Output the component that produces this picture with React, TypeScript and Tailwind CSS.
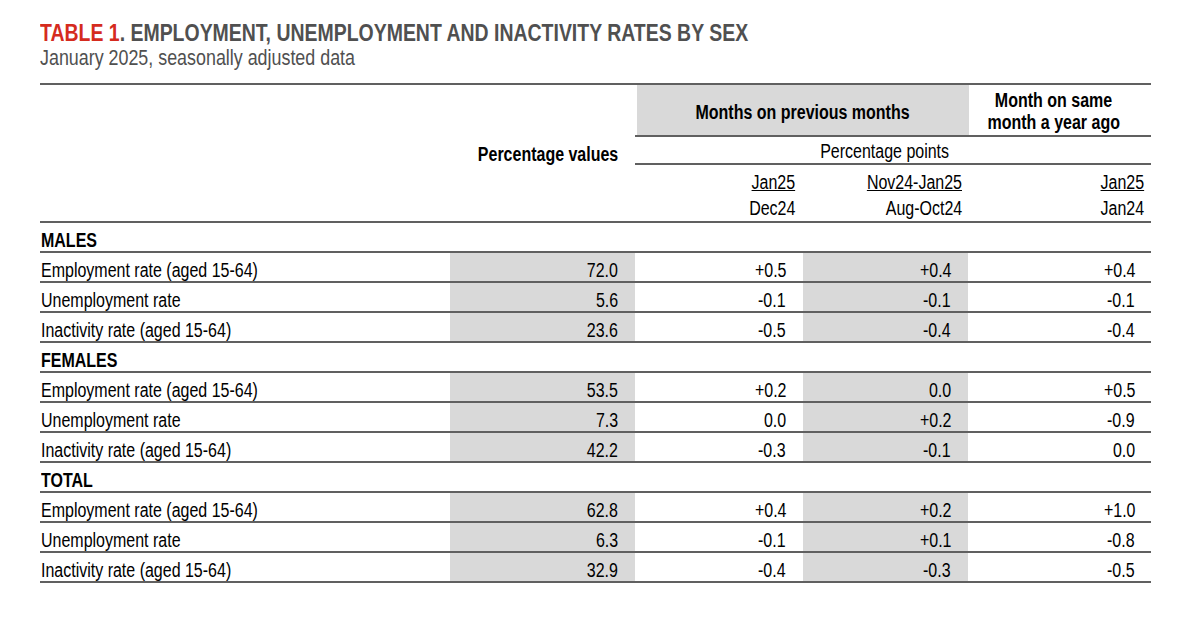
import React from "react";

const FONT = "font-['Liberation_Sans','Arial',sans-serif]";

type Row = { label: string; v: [string, string, string, string] };
type Section = { title: string; rows: Row[] };

const sections: Section[] = [
  {
    title: "MALES",
    rows: [
      { label: "Employment rate (aged 15-64)", v: ["72.0", "+0.5", "+0.4", "+0.4"] },
      { label: "Unemployment rate", v: ["5.6", "-0.1", "-0.1", "-0.1"] },
      { label: "Inactivity rate (aged 15-64)", v: ["23.6", "-0.5", "-0.4", "-0.4"] },
    ],
  },
  {
    title: "FEMALES",
    rows: [
      { label: "Employment rate (aged 15-64)", v: ["53.5", "+0.2", "0.0", "+0.5"] },
      { label: "Unemployment rate", v: ["7.3", "0.0", "+0.2", "-0.9"] },
      { label: "Inactivity rate (aged 15-64)", v: ["42.2", "-0.3", "-0.1", "0.0"] },
    ],
  },
  {
    title: "TOTAL",
    rows: [
      { label: "Employment rate (aged 15-64)", v: ["62.8", "+0.4", "+0.2", "+1.0"] },
      { label: "Unemployment rate", v: ["6.3", "-0.1", "+0.1", "-0.8"] },
      { label: "Inactivity rate (aged 15-64)", v: ["32.9", "-0.4", "-0.3", "-0.5"] },
    ],
  },
];

function L({ children, className = "" }: { children: React.ReactNode; className?: string }) {
  return <span className={`inline-block whitespace-nowrap origin-left scale-x-[0.82] ${className}`}>{children}</span>;
}
function R({ children, className = "" }: { children: React.ReactNode; className?: string }) {
  return <span className={`inline-block whitespace-nowrap origin-right scale-x-[0.82] ${className}`}>{children}</span>;
}
function C({ children, className = "" }: { children: React.ReactNode; className?: string }) {
  return <span className={`inline-block whitespace-nowrap origin-center scale-x-[0.82] ${className}`}>{children}</span>;
}

function DataRow({ row }: { row: Row }) {
  return (
    <div className="flex h-[30px] border-b-2 border-[#606060]">
      <div className="w-[410px] flex items-center pl-px pt-[6px]">
        <L>{row.label}</L>
      </div>
      <div className="w-[185px] flex items-center justify-end pr-[17px] pt-[6px] bg-[#d9d9d9]">
        <R>{row.v[0]}</R>
      </div>
      <div className="w-[168px] flex items-center justify-end pr-[17px] pt-[6px]">
        <R>{row.v[1]}</R>
      </div>
      <div className="w-[165px] flex items-center justify-end pr-[17px] pt-[6px] bg-[#d9d9d9]">
        <R>{row.v[2]}</R>
      </div>
      <div className="w-[183px] flex items-center justify-end pr-[16px] pt-[6px]">
        <R>{row.v[3]}</R>
      </div>
    </div>
  );
}

export default function App() {
  return (
    <div className={`w-[1200px] h-[629px] bg-white text-black ${FONT}`}>
      <div className="pl-10 pt-[19.5px]">
        <div className="text-[23px] leading-[26px] font-bold text-[#505050] whitespace-nowrap">
          <span className="inline-block origin-left scale-x-[0.846]">
            <span className="text-[#d52b1e]">TABLE 1</span>. EMPLOYMENT, UNEMPLOYMENT AND INACTIVITY RATES BY SEX
          </span>
        </div>
        <div className="text-[21.8px] leading-[24px] text-[#505050]">
          <L>January 2025, seasonally adjusted data</L>
        </div>
      </div>

      <div className="ml-10 mt-[13.5px] w-[1111px] text-[19.5px] leading-[22px]">
        {/* Header */}
        <div className="flex border-t-2 border-b-2 border-[#606060]">
          <div className="w-[595px] flex items-center justify-end pr-[17px] pt-[2px] font-bold">
            <R>Percentage values</R>
          </div>
          <div className="w-[516px] flex flex-col">
            <div className="flex h-[52px] border-b-2 border-[#606060]">
              <div className="w-[333px] ml-[2px] bg-[#d9d9d9] flex items-center justify-center font-bold pt-[3px]">
                <C>Months on previous months</C>
              </div>
              <div className="w-[183px] flex flex-col items-center justify-center font-bold pr-[12px] pt-[2px]">
                <C>Month on same</C>
                <C>month a year ago</C>
              </div>
            </div>
            <div className="flex h-[28px] border-b-2 border-[#606060] items-center justify-center pr-[16px] pt-[1px]">
              <C>Percentage points</C>
            </div>
            <div className="flex pt-[4px]">
              <div className="w-[168px] flex flex-col items-end pr-[8px]">
                <R className="underline leading-[26px]">Jan25</R>
                <R className="leading-[26px]">Dec24</R>
              </div>
              <div className="w-[165px] flex flex-col items-end pr-[6px]">
                <R className="underline leading-[26px]">Nov24-Jan25</R>
                <R className="leading-[26px]">Aug-Oct24</R>
              </div>
              <div className="w-[183px] flex flex-col items-end pr-[7px]">
                <R className="underline leading-[26px]">Jan25</R>
                <R className="leading-[26px]">Jan24</R>
              </div>
            </div>
          </div>
        </div>

        {sections.map((s) => (
          <div key={s.title}>
            <div className="flex h-[30px] border-b-2 border-[#606060] items-center pl-px pt-[6px] font-bold">
              <L>{s.title}</L>
            </div>
            {s.rows.map((r) => (
              <DataRow key={s.title + r.label} row={r} />
            ))}
          </div>
        ))}
      </div>
    </div>
  );
}
